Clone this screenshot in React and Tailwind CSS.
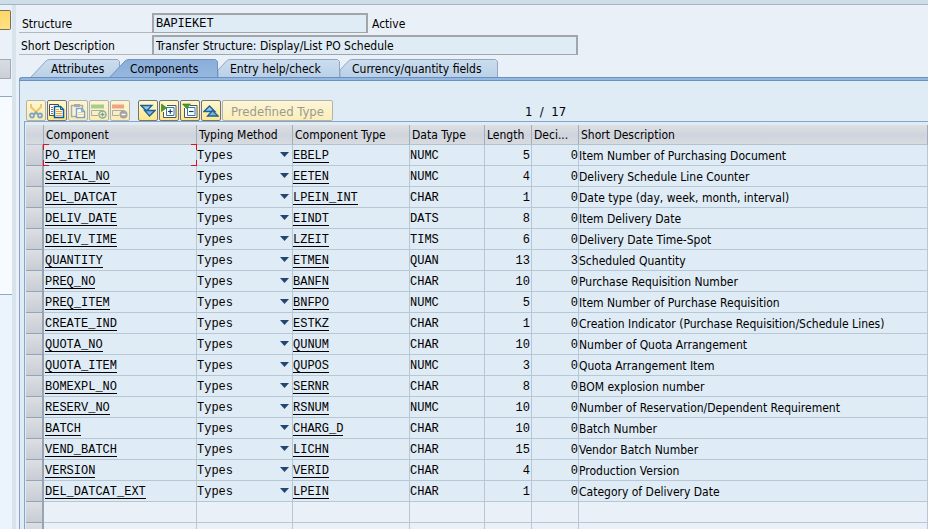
import React from "react";

const rows = [
  ["PO_ITEM", "EBELP", "NUMC", 5, 0, "Item Number of Purchasing Document"],
  ["SERIAL_NO", "EETEN", "NUMC", 4, 0, "Delivery Schedule Line Counter"],
  ["DEL_DATCAT", "LPEIN_INT", "CHAR", 1, 0, "Date type (day, week, month, interval)"],
  ["DELIV_DATE", "EINDT", "DATS", 8, 0, "Item Delivery Date"],
  ["DELIV_TIME", "LZEIT", "TIMS", 6, 0, "Delivery Date Time-Spot"],
  ["QUANTITY", "ETMEN", "QUAN", 13, 3, "Scheduled Quantity"],
  ["PREQ_NO", "BANFN", "CHAR", 10, 0, "Purchase Requisition Number"],
  ["PREQ_ITEM", "BNFPO", "NUMC", 5, 0, "Item Number of Purchase Requisition"],
  ["CREATE_IND", "ESTKZ", "CHAR", 1, 0, "Creation Indicator (Purchase Requisition/Schedule Lines)"],
  ["QUOTA_NO", "QUNUM", "CHAR", 10, 0, "Number of Quota Arrangement"],
  ["QUOTA_ITEM", "QUPOS", "NUMC", 3, 0, "Quota Arrangement Item"],
  ["BOMEXPL_NO", "SERNR", "CHAR", 8, 0, "BOM explosion number"],
  ["RESERV_NO", "RSNUM", "NUMC", 10, 0, "Number of Reservation/Dependent Requirement"],
  ["BATCH", "CHARG_D", "CHAR", 10, 0, "Batch Number"],
  ["VEND_BATCH", "LICHN", "CHAR", 15, 0, "Vendor Batch Number"],
  ["VERSION", "VERID", "CHAR", 4, 0, "Production Version"],
  ["DEL_DATCAT_EXT", "LPEIN", "CHAR", 1, 0, "Category of Delivery Date"],
];

const mono = "font-['Liberation_Mono',monospace] text-[12px]";

function ToolButton({ label, disabled, children }) {
  return (
    <button
      type="button"
      aria-label={label}
      disabled={disabled}
      className="flex h-[21px] w-5 items-center justify-center rounded-[2px] border border-[#77736a] bg-linear-to-b from-[#fff8d0] to-[#fde68c] disabled:border-[#b5b2a2] disabled:from-[#fcf5d6] disabled:to-[#faecb4]"
    >
      <svg viewBox="0 0 16 16" className="h-4 w-4" fill="none" aria-hidden="true">
        {children}
      </svg>
    </button>
  );
}

function Toolbar() {
  return (
    <div className="flex items-start pt-[19px] pl-1.5">
      <div className="flex gap-px">
        <ToolButton label="Cut" disabled>
          <path d="M3 1v3l7 7M13 1v3l-7 7" stroke="#f0c566" strokeWidth="2" />
          <path d="M6 11.500 8 9.500 10 11.500" stroke="#7ea6c4" strokeWidth="2" />
          <circle cx="4" cy="12.500" r="2" stroke="#7ea6c4" strokeWidth="1.800" />
          <circle cx="12" cy="12.500" r="2" stroke="#7ea6c4" strokeWidth="1.800" />
        </ToolButton>
        <ToolButton label="Copy">
          <path d="M.5 1.500h9v11h-9z" fill="#fff" stroke="#444b52" />
          <path d="M2 4.500h2M2 6.500h2M2 8.500h2M2 10.500h2" stroke="#777" />
          <path d="M5.500 3.500h6l3 3v8h-9z" fill="#fff" stroke="#0d5c92" strokeWidth="1.500" />
          <path d="M11.500 3.500v3h3z" fill="#a9c9e2" stroke="#0d5c92" />
          <path d="M7 6.500h3M7 8.500h6M7 10.500h6M7 12.500h6" stroke="#eda62b" />
        </ToolButton>
        <ToolButton label="Paste" disabled>
          <path d="M1.500 2.500h11v11h-11z" fill="#f7f3df" stroke="#aaaaa6" strokeWidth="1.500" />
          <path d="M4 1h6v3H4z" fill="#aaaaa6" />
          <path d="M6.500 5.500h5l3 3v6h-8z" fill="#fff" stroke="#7fa7c2" strokeWidth="1.500" />
          <path d="M11.500 5.500v3h3" stroke="#7fa7c2" />
          <path d="M8 9.500h5M8 11.500h5" stroke="#f0d078" />
        </ToolButton>
        <ToolButton label="Insert row" disabled>
          <path d="M0 1.500h13v4H0z" fill="#a9cc8c" />
          <path d="M8 7.500H.5v5H7M12.500 7.500H8" stroke="#aaaaa6" />
          <circle cx="11.500" cy="11.500" r="3.500" fill="#f8f4df" stroke="#8fae91" strokeWidth="1.500" />
          <path d="M9.500 11.500h4M11.500 9.500v4" stroke="#7da282" strokeWidth="1.400" />
        </ToolButton>
        <ToolButton label="Delete row" disabled>
          <path d="M0 1.500h12v4H0z" fill="#eea384" />
          <path d="M8 7.500H.5v5H7M12.500 7.500H8" stroke="#aaaaa6" />
          <circle cx="11.500" cy="11.500" r="4" fill="#a5a5a3" />
          <path d="M9.500 11.500h4" stroke="#fff" strokeWidth="1.400" />
        </ToolButton>
      </div>
      <div className="ml-2 flex gap-px">
        <ToolButton label="Expand all">
          <path d="M1 2.500h11L6.500 8z" fill="#9fc0df" stroke="#15639a" strokeWidth="1.300" />
          <path d="M4.500 7.500h10.500L9.500 13z" fill="#86add3" stroke="#15639a" strokeWidth="1.300" />
        </ToolButton>
        <ToolButton label="Expand include">
          <path d="M6 2.500h9v12H2.500V9" fill="#fff" stroke="#555" />
          <path d="M5.500 4.500h7.500v8H5.500z" fill="#fff" stroke="#2d78aa" />
          <path d="M7 8.500h4.500M9.250 6.300v4.400" stroke="#103f66" strokeWidth="1.200" />
          <path d="M.5 1v7.500L5.500 4.750z" fill="#4b9b24" stroke="#32751b" strokeWidth=".6" />
        </ToolButton>
        <ToolButton label="Collapse include">
          <path d="M8 2.500h7v12H2.500V5" fill="#fff" stroke="#555" />
          <path d="M5.500 4.500h7.500v8H5.500z" fill="#fff" stroke="#2d78aa" />
          <path d="M7 8.500h4.500" stroke="#103f66" strokeWidth="1.200" />
          <path d="M.5 1h8l-4 4.500z" fill="#4b9b24" stroke="#32751b" strokeWidth=".6" />
        </ToolButton>
        <ToolButton label="Collapse all">
          <path d="M1 8.500h11L6.500 3z" fill="#9fc0df" stroke="#15639a" strokeWidth="1.300" />
          <path d="M4.500 13H15L9.500 7.500z" fill="#86add3" stroke="#15639a" strokeWidth="1.300" />
        </ToolButton>
        <button
          type="button"
          disabled
          className="h-[21px] w-[111px] rounded-[2px] border border-[#b5b3a8] bg-linear-to-b from-[#fcf6d8] to-[#fbeeb9] pt-0.5 text-[13px] leading-none text-[#9c9a91]"
        >
          Predefined Type
        </button>
      </div>
      <div className="ml-48 h-[21px] text-[13px] leading-[23px] whitespace-pre">1&nbsp; /&nbsp; 17</div>
    </div>
  );
}

function Tab({ width, active, wide, children }) {
  const start = wide ? "M0 18 15 2Q16.500 .5 19 .5" : "M0 18V11L8.500 2Q10 .5 12 .5";
  return (
    <button
      type="button"
      role="tab"
      aria-selected={!!active}
      style={{ width }}
      className={
        "relative h-[18px] shrink-0 text-left leading-[21px] " + (active ? "z-10 -ml-2.5 " : "") + (wide ? "pl-5" : "pl-3")
      }
    >
      <svg className="absolute inset-0 h-full w-full" viewBox={`0 0 ${width} 18`} fill="none" aria-hidden="true">
        <defs>
          <linearGradient id="tabfill" x1="0" y1="0" x2="0" y2="1">
            <stop offset="0" stopColor="#cbddee" />
            <stop offset="1" stopColor="#bbd1e7" />
          </linearGradient>
          <linearGradient id="tabactive" x1="0" y1="0" x2="0" y2="1">
            <stop offset="0" stopColor="#8aaed9" />
            <stop offset="1" stopColor="#96b8e0" />
          </linearGradient>
        </defs>
        <path
          d={`${start}H${width - 2.5}L${width - 0.5} 2.500V18`}
          fill={active ? "url(#tabactive)" : "url(#tabfill)"}
          stroke={active ? "#6f93c0" : "#8fa7c4"}
        />
      </svg>
      <span className="relative">{children}</span>
    </button>
  );
}

function Sidebar() {
  return (
    <aside className="flex w-4 shrink-0 flex-col border-r-4 border-[#d8e3eb] bg-[#eaf1f8]">
      <div className="h-[50px] pt-[5px]">
        <div className="h-5 w-[11px] rounded-r-[2px] border border-l-0 border-[#756f5d] bg-linear-to-b from-[#ffd766] to-[#ffe184]" />
      </div>
      <div className="mt-1 h-5 w-[11px] border border-l-0 border-[#a2a9b3] bg-linear-to-b from-[#d9dde2] to-[#cbcfd7]" />
      <div className="h-[18px] border-b border-[#8fa9c5] bg-[#eef5fc]" />
      <div className="h-[198px] border-b border-[#8fa9c5] bg-[#f7fbff]" />
      <div className="flex-1 bg-[#ebf3fc]" />
    </aside>
  );
}

const th = "border-r border-b border-r-[#9fadbe] border-b-[#b3c2cf] px-0.5 pt-0.5 text-left font-normal whitespace-nowrap";
const td = "border-r border-b border-[#b8c7d6] whitespace-nowrap";
const selector =
  "border-r-2 border-b border-[#98a3b3] bg-linear-to-b from-[#dcdfe3] to-[#c8ccd5]";

function Corners() {
  return (
    <>
      <span className="pointer-events-none absolute -top-px -left-px h-1.5 w-1.5 border-t border-l border-[#e01020]" />
      <span className="pointer-events-none absolute -bottom-px -left-px h-1.5 w-1.5 border-b border-l border-[#e01020]" />
      <span className="pointer-events-none absolute -top-px -right-px h-1.5 w-1.5 border-t border-r border-[#e01020]" />
      <span className="pointer-events-none absolute -right-px -bottom-px h-1.5 w-1.5 border-r border-b border-[#e01020]" />
    </>
  );
}

function NameLink({ children }) {
  return (
    <a href="#" className={mono + " mt-px block h-[15px] w-fit border-b border-black leading-4"}>
      {children}
    </a>
  );
}

function ComponentTable() {
  return (
    <div className="ml-1 border-t border-l border-[#86a5c8] pt-[3px] pl-px">
      <table className="w-full table-fixed border-separate border-spacing-0 text-[12px] leading-[15px]">
        <colgroup>
          <col className="w-[18px]" />
          <col className="w-[153px]" />
          <col className="w-24" />
          <col className="w-[117px]" />
          <col className="w-[75px]" />
          <col className="w-[47px]" />
          <col className="w-[47px]" />
          <col />
        </colgroup>
        <thead>
          <tr className="h-5 bg-linear-to-b from-[#dde0e3] via-[#cfd3dc] to-[#d8dde1]">
            <th className={th}></th>
            <th className={th}>Component</th>
            <th className={th}>Typing Method</th>
            <th className={th}>Component Type</th>
            <th className={th}>Data Type</th>
            <th className={th}>Length</th>
            <th className={th}>Deci...</th>
            <th className={th}>Short Description</th>
          </tr>
        </thead>
        <tbody>
          {rows.map(([name, type, dataType, length, decimals, text], i) => (
            <tr key={name} className="h-[21px]">
              <td className={selector + " p-0"}></td>
              <td className={td + " relative py-0 pr-0 pl-px"}>
                <NameLink>{name}</NameLink>
                {i === 0 && <Corners />}
              </td>
              <td className={td + " px-0 pt-0.5 pb-0"}>
                <div className="relative">
                  <select
                    aria-label={"Typing method of " + name}
                    className={mono + " block h-[18px] w-full appearance-none bg-transparent leading-[18px]"}
                  >
                    <option>Types</option>
                  </select>
                  <svg className="pointer-events-none absolute top-[5px] right-[3px] h-[5px] w-[9px]" viewBox="0 0 9 5" aria-hidden="true">
                    <path d="M0 0h9L4.500 5z" fill="#21466f" />
                  </svg>
                </div>
              </td>
              <td className={td + " p-0"}>
                <NameLink>{type}</NameLink>
              </td>
              <td className={td + " px-0 pt-[3px] pb-0 " + mono}>{dataType}</td>
              <td className={td + " pt-[3px] pr-px pb-0 pl-0 text-right " + mono}>{length}</td>
              <td className={td + " px-0 pt-[3px] pb-0 text-right " + mono}>{decimals}</td>
              <td className={td + " px-0 pt-0.5 pb-0"}>{text}</td>
            </tr>
          ))}
          {[0, 1].map((n) => (
            <tr key={n} className="h-[21px] bg-[#e9f0f7]">
              <td className={selector + " p-0"}></td>
              {[1, 2, 3, 4, 5, 6, 7].map((c) => (
                <td key={c} className={td + " p-0"}></td>
              ))}
            </tr>
          ))}
        </tbody>
      </table>
    </div>
  );
}

const field =
  "h-5 border-t-2 border-r-2 border-b border-l-2 border-[#a2a6ab] bg-[#dfebf5] px-0.5 text-black outline-none";

export default function App() {
  return (
    <div className="flex h-screen flex-col overflow-hidden bg-[#e9f0f7] font-['DejaVu_Sans_Condensed','Noto_Sans',sans-serif] text-[12px] text-black">
      <div className="h-[5px] shrink-0 border-b border-[#a3b4c9] bg-[#cfdde8]" />
      <div className="flex min-h-0 flex-1">
        <Sidebar />
        <main className="min-w-0 flex-1 pl-[3px]">
          <div className="flex flex-col gap-0.5 pt-2">
            <div className="flex h-5 items-start">
              <label htmlFor="structure" className="h-5 w-[133px] border-b border-[#b5b7ba] pl-[3px] leading-[22px]">
                Structure
              </label>
              <input id="structure" readOnly defaultValue="BAPIEKET" className={field + " w-[216px] " + mono} />
              <span className="pl-1 leading-[22px]">Active</span>
            </div>
            <div className="flex h-5 items-start">
              <label htmlFor="description" className="h-5 w-[133px] border-b border-[#b5b7ba] pl-0.5 leading-[22px]">
                Short Description
              </label>
              <input
                id="description"
                readOnly
                defaultValue="Transfer Structure: Display/List PO Schedule"
                className={field + " w-[426px]"}
              />
            </div>
          </div>
          <div role="tablist" className="flex pt-1 pl-3">
            <Tab width={89} wide>Attributes</Tab>
            <Tab width={108} wide active>Components</Tab>
            <Tab width={122}>Entry help/check</Tab>
            <Tab width={158}>Currency/quantity fields</Tab>
          </div>
          <div className="h-1 rounded-tl-[3px] border-t border-b border-l border-[#6990bf] bg-[#94b8e0]" />
          <section className="h-full border-l border-[#86a5c8] bg-[#dfebf5]">
            <Toolbar />
            <ComponentTable />
          </section>
        </main>
      </div>
    </div>
  );
}
